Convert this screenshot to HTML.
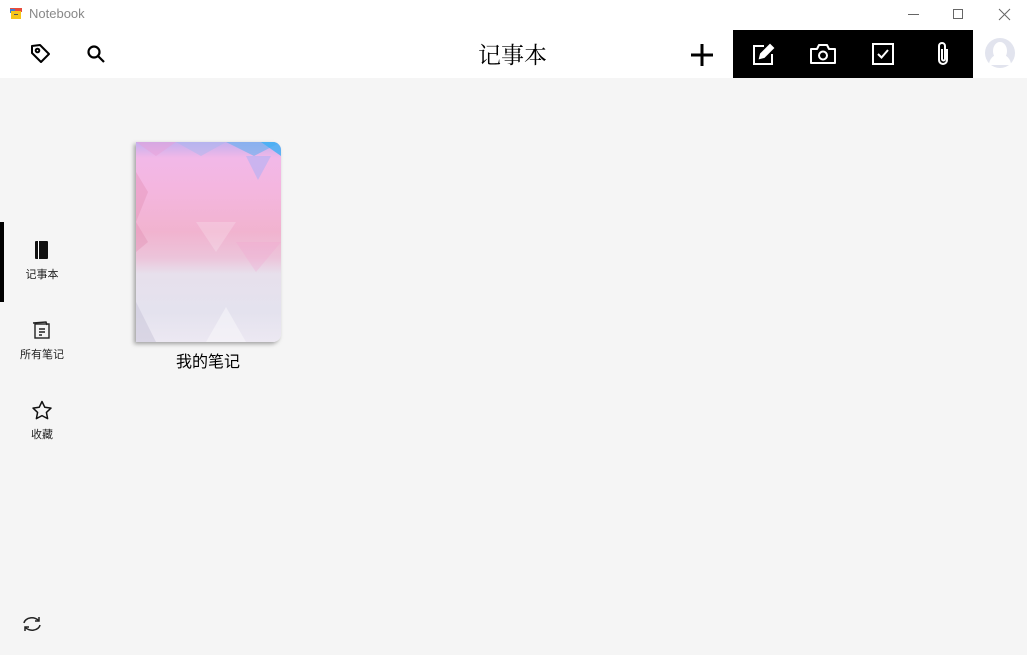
<!DOCTYPE html>
<html><head><meta charset="utf-8"><style>
*{margin:0;padding:0;box-sizing:border-box}
body{width:1027px;height:655px;background:#f5f5f5;font-family:"Liberation Sans","Noto Sans CJK SC",sans-serif;position:relative;overflow:hidden}
.top{position:absolute;left:0;top:0;width:1027px;height:78px;background:#fff}
.abs{position:absolute}
svg{display:block}
.side{position:absolute;left:0;width:84px;text-align:center;font-size:11px;color:#222}
</style></head><body>
<div class="top"></div>
<div class="abs" style="left:10px;top:8px;width:12px;height:11px">
<svg width="12" height="11"><rect x="0" y="0" width="12" height="4" fill="#e74c3c"/><rect x="0" y="1" width="5" height="4" fill="#3b7dd8"/><rect x="1" y="3" width="10" height="8" fill="#f5c518"/><rect x="4" y="6" width="4" height="1" fill="#555"/></svg></div>
<div class="abs" style="left:29px;top:6px;font-size:13px;color:#888">Notebook</div>
<svg class="abs" style="left:905px;top:8px" width="110" height="14" stroke="#666" fill="none" stroke-width="1"><line x1="3" y1="6.5" x2="14" y2="6.5"/><rect x="48.5" y="1.5" width="9" height="9"/><path d="M94 1l11 11M105 1L94 12"/></svg>
<svg class="abs" style="left:30px;top:43px" width="22" height="22" fill="none" stroke="#000" stroke-width="2" stroke-linejoin="round"><path d="M2 3l8-1 9 9-8 8-9-9z"/><circle cx="7.5" cy="7.5" r="1.8"/></svg>
<svg class="abs" style="left:86px;top:44px" width="20" height="20" fill="none" stroke="#000" stroke-width="2.2"><circle cx="8" cy="8" r="5.5"/><path d="M12 12l6 6"/></svg>
<div class="abs" style="left:478px;top:37px;font-size:23px;color:#000;font-family:'Noto Serif CJK SC','Noto Sans CJK SC',serif">记事本</div>
<svg class="abs" style="left:690px;top:43px" width="24" height="24" stroke="#000" stroke-width="3"><path d="M12 1v22M1 12h22"/></svg>
<div class="abs" style="left:733px;top:30px;width:240px;height:48px;background:#000"></div>
<svg class="abs" style="left:751px;top:43px" width="24" height="24" fill="none" stroke="#fff" stroke-width="2"><path d="M13 3H3v18h18V11"/><path d="M9 15l1-4 9-9 3 3-9 9z" fill="#fff"/></svg>
<svg class="abs" style="left:809px;top:42px" width="28" height="24" fill="none" stroke="#fff" stroke-width="2"><path d="M2 7h6l2-4h8l2 4h6v14H2z" stroke-linejoin="round"/><circle cx="14" cy="13.5" r="4"/></svg>
<svg class="abs" style="left:871px;top:42px" width="24" height="24" fill="none" stroke="#fff" stroke-width="2"><rect x="2" y="2" width="20" height="20"/><path d="M7 12l3.5 3.5L17 8"/></svg>
<svg class="abs" style="left:933px;top:41px" width="20" height="26" fill="none" stroke="#fff" stroke-width="2"><path d="M14 8v11a4 4 0 01-8 0V5a3 3 0 016 0v13a1.5 1.5 0 01-3 0V8"/></svg>
<svg class="abs" style="left:984px;top:37px" width="32" height="32"><circle cx="16" cy="16" r="15" fill="#e2e4ee"/><path d="M5 28a11 11 0 0122 0" fill="#fff"/><ellipse cx="16" cy="14" rx="7" ry="9" fill="#fff"/></svg>
<div class="abs" style="left:0;top:222px;width:4px;height:80px;background:#000"></div>
<svg class="abs" style="left:34px;top:240px" width="16" height="22"><rect x="1" y="1" width="13" height="18" rx="1" fill="#111"/><rect x="4" y="1" width="1" height="18" fill="#fff"/></svg>
<div class="side" style="top:266px">记事本</div>
<svg class="abs" style="left:31px;top:320px" width="22" height="20" fill="none" stroke="#222" stroke-width="1.4"><path d="M2 3l13-1 1 3"/><rect x="4" y="4" width="14" height="14"/><path d="M8 9h6M8 12h6M8 15h3"/></svg>
<div class="side" style="top:346px">所有笔记</div>
<svg class="abs" style="left:31px;top:400px" width="22" height="20" fill="none" stroke="#111" stroke-width="1.5" stroke-linejoin="round"><path d="M11 1.5l2.8 5.8 6.2.8-4.6 4.3 1.2 6.2L11 15.6l-5.6 3 1.2-6.2L2 8.1l6.2-.8z"/></svg>
<div class="side" style="top:426px">收藏</div>
<svg class="abs" style="left:21px;top:614px" width="22" height="20" fill="none" stroke="#222" stroke-width="1.5"><path d="M3 9a8 6 0 0115-2"/><path d="M18 3v4h-4"/><path d="M19 11a8 6 0 01-15 2"/><path d="M4 17v-4h4"/></svg>
<div class="abs" style="left:136px;top:142px;width:145px;height:200px;border-radius:0 8px 8px 0;box-shadow:-2px 2px 4px rgba(0,0,0,.35);overflow:hidden;background:linear-gradient(180deg,#c4b0ee 0%,#f2b8e8 8%,#f4b6de 25%,#f1b3cf 45%,#ecc4da 58%,#e7e0ec 66%,#e4e2ee 85%,#ece8f2 100%)">
<svg width="145" height="200" style="position:absolute;left:0;top:0">
<polygon points="0,0 40,0 20,14" fill="#e8a0d8" opacity=".5"/>
<polygon points="40,0 90,0 65,14" fill="#a8b8f0" opacity=".5"/>
<polygon points="90,0 145,0 118,14" fill="#60b0f0" opacity=".6"/>
<polygon points="125,0 145,0 145,14" fill="#3fb0f5" opacity=".8"/>
<polygon points="110,14 135,14 122,38" fill="#b0b0f5" opacity=".6"/>
<polygon points="0,30 12,50 0,80" fill="#e08ab0" opacity=".35"/>
<polygon points="0,80 12,100 0,110" fill="#e08ab0" opacity=".35"/>
<polygon points="60,80 100,80 80,110" fill="#ffffff" opacity=".2"/>
<polygon points="100,100 145,100 120,130" fill="#f3a0d0" opacity=".25"/>
<polygon points="0,160 20,200 0,200" fill="#c8c4d8" opacity=".5"/>
<polygon points="90,165 110,200 70,200" fill="#fff" opacity=".4"/>
</svg></div>
<div class="abs" style="left:176px;top:348px;font-size:16px;color:#000">我的笔记</div>
</body></html>
